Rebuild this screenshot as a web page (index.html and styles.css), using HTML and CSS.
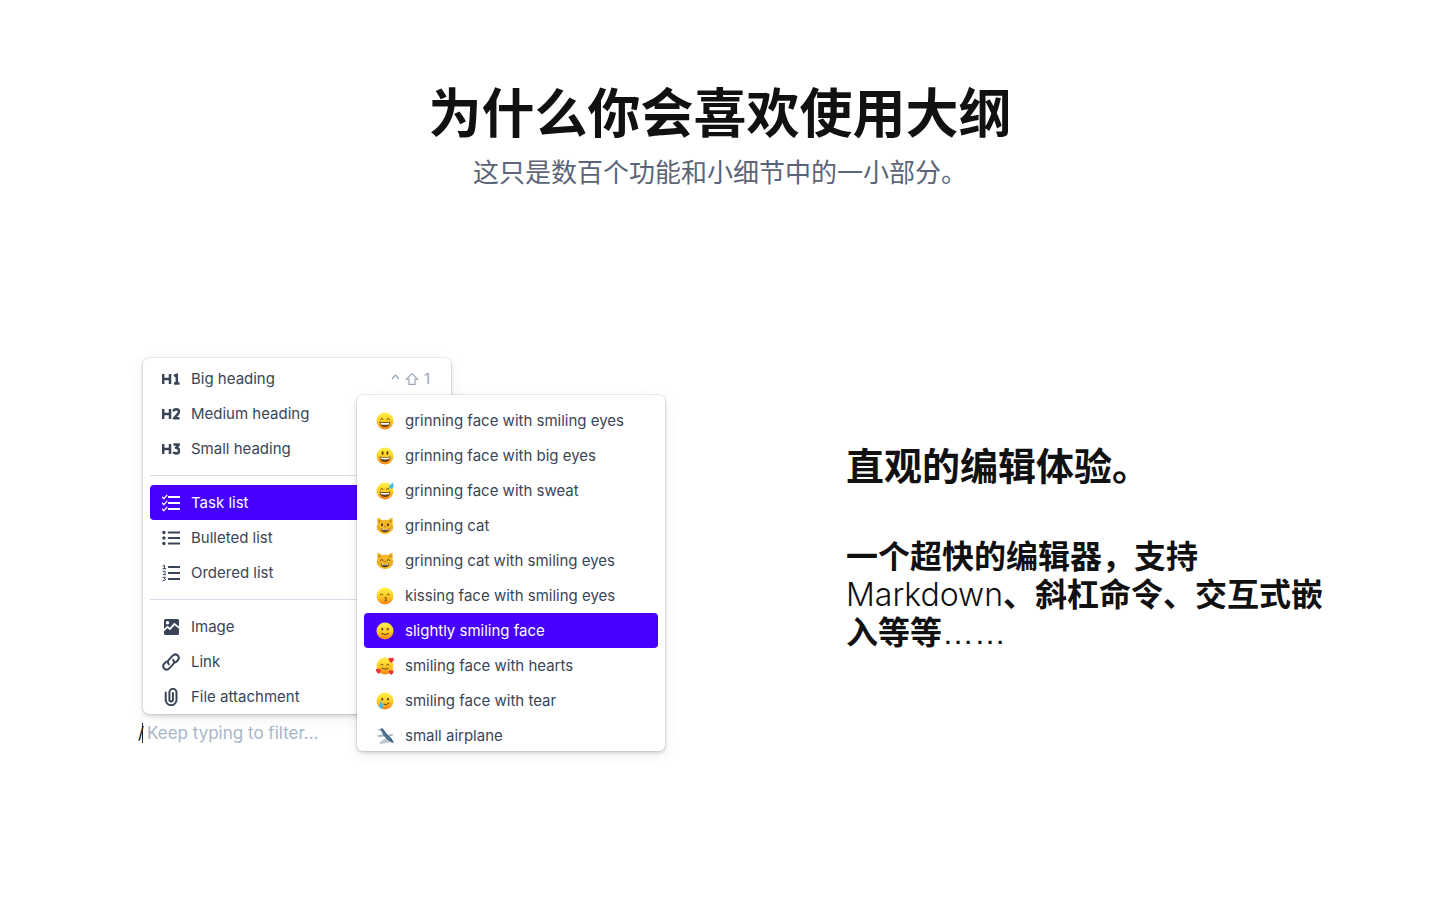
FILE: index.html
```
<!DOCTYPE html>
<html lang="zh-CN">
<head>
<meta charset="utf-8">
<meta name="viewport" content="width=device-width, initial-scale=1">
<title>为什么你会喜欢使用大纲</title>
<link rel="stylesheet" href="styles.css">
</head>
<body>
<svg class="defs" aria-hidden="true">
  <defs>
    <linearGradient id="skin" x1="0" y1="0" x2="0" y2="1">
      <stop offset="0" stop-color="#fff04a"/><stop offset=".5" stop-color="#ffd028"/><stop offset="1" stop-color="#f78010"/>
    </linearGradient>
    <symbol id="face" viewBox="0 0 18 18"><circle cx="9" cy="9" r="8.5" fill="url(#skin)"/></symbol>
    <symbol id="cat" viewBox="0 0 18 18">
      <path d="M1.500 .8Q4 1 6 3Q9 2.300 12 3Q14 1 16.500 .8Q17 4 16.600 7.500Q18 11 15.500 14Q13 17 9 17Q5 17 2.500 14Q0 11 1.400 7.500Q1 4 1.500 .8Z" fill="#f3b823"/>
      <path d="M2.600 2.500L4.700 4L3 6ZM15.400 2.500L13.300 4L15 6Z" fill="#b07c2a"/>
      <path d="M.3 9.500L3.500 10.200M.5 12.500L3.500 11.800M17.700 9.500L14.500 10.200M17.500 12.500L14.500 11.800" stroke="#c98b1c" stroke-width=".5"/>
      <path d="M4.500 11.500Q9 12.700 13.500 11.500Q13 15.300 9 15.300Q5 15.300 4.500 11.500Z" fill="#55331a"/>
      <path d="M5.300 12.100Q9 13 12.700 12.100L12.300 13Q9 13.700 5.700 13Z" fill="#fff4cf"/>
      <path d="M8 9.400H10L9 10.500Z" fill="#704323"/>
    </symbol>
  </defs>
</svg>

<main class="page">
  <header class="intro">
    <h1 class="intro-title">为什么你会喜欢使用大纲</h1>
    <p class="intro-text">这只是数百个功能和小细节中的一小部分。</p>
  </header>

  <section class="feature">
    <div class="editor">
      <div class="menu menu-blocks">
        <button class="item" type="button"><svg class="icon" viewBox="0 0 18 18"><g class="line heavy"><path d="M1.200 4V14M1.200 9H8M8 4V14M12 6L14.800 4.500V13.500M12 13.400H17.500"/></g></svg><span>Big heading</span><span class="keys"><svg class="key" viewBox="0 0 9 12"><path d="M1 6L4.500 2L8 6"/></svg><svg class="key key-shift" viewBox="0 0 14 14"><path d="M7 1.500L12.500 7.200H10V12.300H4V7.200H1.500Z"/></svg><span>1</span></span></button>
        <button class="item" type="button"><svg class="icon" viewBox="0 0 18 18"><g class="line heavy"><path d="M1.200 4V14M1.200 9H8M8 4V14M11.800 6.500V5.800Q11.800 4.300 14.300 4.300Q17 4.300 17 6.500Q17 8 14.500 10.500L12 13.300H17.500"/></g></svg><span>Medium heading</span></button>
        <button class="item" type="button"><svg class="icon" viewBox="0 0 18 18"><g class="line heavy"><path d="M1.200 4V14M1.200 9H8M8 4V14M11.500 4.500H17L14 7.800Q17.200 8 17.200 10.800Q17.200 13.500 14.300 13.500Q12 13.500 11.700 11.800"/></g></svg><span>Small heading</span></button>
        <hr class="divider">
        <button class="item item-active" type="button"><svg class="icon" viewBox="0 0 18 18"><g class="line"><path d="M6.800 3H17.500M6.800 9H17.500M6.800 15H17.500"/><path class="thin" d="M.5 3.300L1.900 4.700L4.800 1.300M.5 9.300L1.900 10.700L4.800 7.300M.5 15.300L1.900 16.700L4.800 13.300"/></g></svg><span>Task list</span></button>
        <button class="item" type="button"><svg class="icon" viewBox="0 0 18 18"><g class="line"><path d="M6.800 3.500H17.500M6.800 9H17.500M6.800 14.500H17.500"/></g><g fill="currentColor"><circle cx="1.900" cy="3.500" r="1.700"/><circle cx="1.900" cy="9" r="1.700"/><circle cx="1.900" cy="14.500" r="1.700"/></g></svg><span>Bulleted list</span></button>
        <button class="item" type="button"><svg class="icon" viewBox="0 0 18 18"><g class="line"><path d="M6.800 3H17.500M6.800 9H17.500M6.800 15H17.500"/><path class="fine" d="M1 2L2.400 1.200V4.700M1 4.700H3.700M1 7.300H3.300V8.500L1.200 10.700H3.600M1 13.300H3.500L2.200 14.600Q3.600 14.700 3.500 15.800Q3.300 17 1 16.500"/></g></svg><span>Ordered list</span></button>
        <hr class="divider">
        <button class="item" type="button"><svg class="icon" viewBox="0 0 18 18"><path fill="currentColor" fill-rule="evenodd" d="M3.500 1H15.500Q17 1 17 2.500V8.500L12.300 4.700L7.800 9.700L5.500 7.800L2 11V2.500Q2 1 3.500 1ZM5.500 3A1.700 1.700 0 1 0 5.500 6.400A1.700 1.700 0 1 0 5.500 3ZM2 13.200L5.500 10L8 12.200L12.600 7.200L17 10.800V15.500Q17 17 15.500 17H3.500Q2 17 2 15.500Z"/></svg><span>Image</span></button>
        <button class="item" type="button"><svg class="icon" viewBox="0 0 18 18"><g class="line"><path d="M6.800 11.200Q4.800 8.800 7 6.600L10.700 2.600Q13 .3 15.600 2.300Q18 4.800 15.800 7.300L13.700 9.400"/><path d="M11.200 6.800Q13.200 9.200 11 11.400L7.300 15.400Q5 17.700 2.400 15.700Q0 13.200 2.200 10.700L4.300 8.600"/></g></svg><span>Link</span></button>
        <button class="item" type="button"><svg class="icon" viewBox="0 0 18 18"><g class="line"><path d="M3.700 4.500V11.800A5.400 5.400 0 0 0 14.500 11.800V4.400A3.500 3.500 0 0 0 7.400 4.400V11.800A1.750 1.750 0 0 0 10.900 11.800V5"/></g></svg><span>File attachment</span></button>
      </div>

      <label class="prompt"><span class="slash">/</span><input class="filter" type="text" placeholder="Keep typing to filter..." aria-label="Filter"></label>

      <div class="menu menu-emoji">
        <button class="item" type="button"><svg class="icon" viewBox="0 0 18 18"><use href="#face"/><g class="feature-line"><path d="M4.500 7.300Q5.800 5.200 7.100 7.300M10.900 7.300Q12.200 5.200 13.500 7.300"/></g><path d="M3.500 9.500Q9 11 14.500 9.500Q14 15 9 15Q4 15 3.500 9.500Z" fill="#69400d"/><path d="M4.500 10.500Q9 11.500 13.500 10.500L13 12.500Q9 13.200 5 12.500Z" fill="#fff"/></svg><span>grinning face with smiling eyes</span></button>
        <button class="item" type="button"><svg class="icon" viewBox="0 0 18 18"><use href="#face"/><g fill="#69400d"><ellipse cx="6.600" cy="6" rx="1" ry="1.900"/><ellipse cx="11.400" cy="6" rx="1" ry="1.900"/><path d="M3.500 9.500Q9 11 14.500 9.500Q14 15 9 15Q4 15 3.500 9.500Z"/></g><path d="M4.500 10.300Q9 11.300 13.500 10.300L13.200 12Q9 12.900 4.800 12Z" fill="#fff"/></svg><span>grinning face with big eyes</span></button>
        <button class="item" type="button"><svg class="icon" viewBox="0 0 18 18"><use href="#face"/><g class="feature-line"><path d="M4.500 7.300Q5.800 5.200 7.100 7.300M10.400 7.300Q11.700 5.200 13 7.300"/></g><path d="M3.500 9.500Q9 11 14.500 9.500Q14 15 9 15Q4 15 3.500 9.500Z" fill="#69400d"/><path d="M4.500 10.500Q9 11.500 13.500 10.500L13 12.300Q9 13 5 12.300Z" fill="#fff"/><path d="M17 .5Q18.700 6.300 15.800 6.700Q12.300 7 13.300 4Q14.200 2.500 17 .5Z" fill="#43bdf2"/></svg><span>grinning face with sweat</span></button>
        <button class="item" type="button"><svg class="icon" viewBox="0 0 18 18"><use href="#cat"/><g fill="#54361c"><ellipse cx="6" cy="7.700" rx="1" ry="1.500"/><ellipse cx="12" cy="7.700" rx="1" ry="1.500"/></g></svg><span>grinning cat</span></button>
        <button class="item" type="button"><svg class="icon" viewBox="0 0 18 18"><use href="#cat"/><g class="feature-line"><path d="M4.200 8.500Q5.700 6 7.200 8.500M10.800 8.500Q12.300 6 13.800 8.500"/></g></svg><span>grinning cat with smiling eyes</span></button>
        <button class="item" type="button"><svg class="icon" viewBox="0 0 18 18"><use href="#face"/><g class="feature-line"><path d="M4.200 7.800Q5.500 5.700 6.800 7.800M10.900 7.800Q12.200 5.700 13.500 7.800"/><path d="M9 10.500Q11.500 10.500 9.800 12.300Q11.500 13.500 9 14.200"/></g></svg><span>kissing face with smiling eyes</span></button>
        <button class="item item-active" type="button"><svg class="icon" viewBox="0 0 18 18"><use href="#face"/><g fill="#69400d"><ellipse cx="6.300" cy="7.200" rx=".9" ry="1.400"/><ellipse cx="11.700" cy="7.200" rx=".9" ry="1.400"/></g><g class="feature-line"><path d="M5.500 11.500Q9 14.200 12.500 11.500"/></g></svg><span>slightly smiling face</span></button>
        <button class="item" type="button"><svg class="icon" viewBox="0 0 18 18"><use href="#face"/><g class="feature-line"><path d="M4.500 8Q5.800 5.800 7.100 8M10.500 8Q11.800 5.800 13.100 8M6 11.200Q9 13.500 12 11.200"/></g><g fill="#f22f38"><path d="M12.700 1.500Q13.700 0 15 1.300Q17 0 17.900 1.700Q18.300 3.700 15.200 6Q12 3.500 12.700 1.500Z"/><path d="M.1 12.500Q.9 11 2.300 12.200Q3.700 11.300 4.800 12.800Q5.200 14.700 2.900 16.900Q-.5 14.900 .1 12.500Z"/><path d="M12.800 14Q13.600 12.700 14.900 13.700Q16.700 12.500 17.600 14.200Q18 15.800 15.300 18Q12.300 16 12.800 14Z"/></g></svg><span>smiling face with hearts</span></button>
        <button class="item" type="button"><svg class="icon" viewBox="0 0 18 18"><use href="#face"/><g fill="#69400d"><ellipse cx="6.300" cy="7.200" rx=".9" ry="1.400"/><ellipse cx="12" cy="7.200" rx=".9" ry="1.400"/></g><g class="feature-line"><path d="M8 12.300Q10.500 13.500 13 11.200"/></g><path d="M5 8.800Q7.800 13.300 7 15Q6.200 17 4.300 16.600Q2.400 15.600 3.300 13Q4.300 11 5 8.800Z" fill="#45bcef"/></svg><span>smiling face with tear</span></button>
        <button class="item" type="button"><svg class="icon" viewBox="0 0 18 18"><path d="M.5 2.200L5.500 1.400L9 3.200L5 4.500Z" fill="#c3ced6"/><path d="M.8 8.600L8.500 7L10.500 9L3 10.300Z" fill="#aab7c0"/><path d="M3 16L10 10.500L17.500 14L17.800 16.500L12.500 15.500L5 17Z" fill="#bcc8d0"/><path d="M12.500 7.500L17.500 6.700L16 9L13 9.500Z" fill="#aab7c0"/><path d="M4 2L6.500 1.300L10.500 6.500L16 12L17.800 16L12.500 13.500L8 9Z" fill="#3e5f85"/><path d="M4.500 2L8.500 7.500L14 12.500" stroke="#8ba3ba" stroke-width=".7" fill="none"/></svg><span>small airplane</span></button>
      </div>
    </div>

    <div class="copy">
      <h2 class="copy-title">直观的编辑体验。</h2>
      <p class="copy-text">一个超快的编辑器，支持<span class="latin">Markdown</span>、斜杠命令、交互式嵌入等等<span class="dots">……</span></p>
    </div>
  </section>
</main>
</body>
</html>
```
FILE: styles.css
```
* { box-sizing: border-box; }

body {
  margin: 0;
  background: #fff;
  color: #111;
  font-family: Inter, "Noto Sans CJK SC", sans-serif;
}

.defs { position: absolute; width: 0; height: 0; }

.page {
  max-width: 1200px;
  margin: 0 auto;
  padding: 78px 0;
}

.intro { text-align: center; }

.intro-title {
  margin: 0 0 11px;
  font: 700 53px/64px "Noto Sans CJK SC", sans-serif;
}

.intro-text {
  margin: 0;
  color: #5b6478;
  font: 400 26px/36px "Noto Sans CJK SC", sans-serif;
}

.feature {
  display: grid;
  grid-template-columns: minmax(548px, 1fr) minmax(0, 484px);
  margin-top: 169px;
  margin-right: -10px;
}

.editor {
  position: relative;
  padding-left: 18px;
}

.menu {
  width: 308px;
  height: 356px;
  overflow: hidden;
  border-radius: 6px;
  background: #fff;
  box-shadow: 0 0 0 1px rgba(0, 0, 0, .06), 0 2px 4px rgba(0, 0, 0, .16), 0 4px 16px rgba(0, 0, 0, .06);
}

.menu-blocks {
  margin-left: 5px;
  padding: 3px 7px 0;
}

.menu-emoji {
  position: absolute;
  top: 37px;
  left: 237px;
  padding: 8px 7px 0;
}

.item {
  display: flex;
  align-items: center;
  gap: 11px;
  width: 100%;
  height: 35px;
  padding: 0 14px 0 12px;
  border: 0;
  border-radius: 4px;
  background: none;
  color: #394557;
  font: 400 15px/20px Inter, sans-serif;
  text-align: left;
  white-space: nowrap;
}

.item-active { background: #4700ff; color: #fff; }

.icon { flex: none; width: 18px; height: 18px; }

.line { fill: none; stroke: currentColor; stroke-width: 2; stroke-linecap: round; stroke-linejoin: round; }
.heavy { stroke-width: 2.5; stroke-linecap: butt; }
.thin { stroke-width: 1.3; }
.fine { stroke-width: 1; }
.feature-line { fill: none; stroke: #69400d; stroke-width: 1; stroke-linecap: round; }

.keys {
  display: flex;
  align-items: center;
  gap: 5px;
  margin-left: auto;
  color: #9ba7b7;
}

.key { width: 9px; height: 14px; fill: none; stroke: currentColor; stroke-width: 1.2; }
.key-shift { width: 14px; }

.divider {
  height: 1px;
  margin: 9px 0;
  border: 0;
  background: #d5dde8;
}

.prompt {
  display: flex;
  align-items: center;
  height: 20px;
  margin-top: 9px;
  font: 400 17px/20px Inter, sans-serif;
}

.slash { width: 4px; color: #111; }

.filter {
  width: 200px;
  height: 20px;
  padding: 0 0 0 4px;
  border: 0;
  border-left: 1px solid #222;
  background: none;
  font: inherit;
  outline: 0;
}

.filter::placeholder { color: #a7b6ca; opacity: 1; }

.copy { padding-top: 80px; }

.copy-title {
  margin: 0 0 45px;
  font: 700 38px/52px "Noto Sans CJK SC", sans-serif;
}

.copy-text {
  margin: 0;
  font: 700 32px/38px "Noto Sans CJK SC", sans-serif;
}

.latin { font: 300 32px/32px Inter, sans-serif; }
.dots { font: 400 32px/32px "Liberation Sans", sans-serif; }
```
